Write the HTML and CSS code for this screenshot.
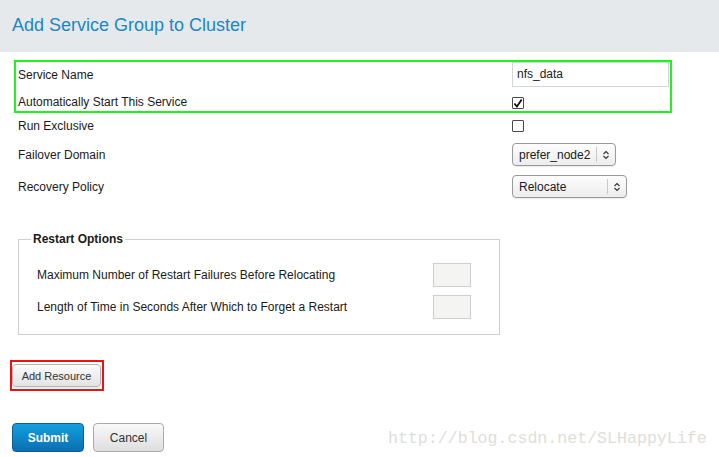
FILE: index.html
```html
<!DOCTYPE html>
<html>
<head>
<meta charset="utf-8">
<title>Add Service Group to Cluster</title>
<link rel="stylesheet" href="styles.css">
</head>
<body>
<header class="hdr">
  <h1 class="title">Add Service Group to Cluster</h1>
</header>
<main class="form">
  <div class="hl-green">
    <div class="row r1">
      <span class="lbl">Service Name</span>
      <span class="textbox">nfs_data</span>
    </div>
    <div class="row r2">
      <span class="lbl">Automatically Start This Service</span>
      <span class="check">
        <svg width="11" height="11" viewBox="0 0 11 11"><path d="M1.5 5.5 L4.3 8.8 L9.6 1.2" fill="none" stroke="#111" stroke-width="2"/></svg>
      </span>
    </div>
  </div>
  <div class="rows">
    <div class="row r3">
      <span class="lbl">Run Exclusive</span>
      <span class="check"></span>
    </div>
    <div class="row r4">
      <span class="lbl">Failover Domain</span>
      <span class="select sel-a"><span class="sel-text">prefer_node2</span><span class="sel-arrow"><svg width="8" height="10" viewBox="0 0 8 10"><path d="M1.5 4 L4 1.5 L6.5 4 M1.5 6 L4 8.5 L6.5 6" fill="none" stroke="#333" stroke-width="1.1"/></svg></span></span>
    </div>
    <div class="row r5">
      <span class="lbl">Recovery Policy</span>
      <span class="select sel-b"><span class="sel-text">Relocate</span><span class="sel-arrow"><svg width="8" height="10" viewBox="0 0 8 10"><path d="M1.5 4 L4 1.5 L6.5 4 M1.5 6 L4 8.5 L6.5 6" fill="none" stroke="#333" stroke-width="1.1"/></svg></span></span>
    </div>
  </div>
  <fieldset class="restart">
    <legend class="legend">Restart Options</legend>
    <div class="frow frow1">
      <span class="lbl">Maximum Number of Restart Failures Before Relocating</span>
      <span class="smallbox"></span>
    </div>
    <div class="frow frow2">
      <span class="lbl">Length of Time in Seconds After Which to Forget a Restart</span>
      <span class="smallbox"></span>
    </div>
  </fieldset>
  <div class="hl-red">
    <button class="btn-add" type="button">Add Resource</button>
  </div>
  <div class="actions">
    <button class="btn-submit" type="button">Submit</button>
    <button class="btn-cancel" type="button">Cancel</button>
  </div>
  <div class="watermark">http://blog.csdn.net/SLHappyLife</div>
</main>
</body>
</html>
```
FILE: styles.css
```css
html, body {
  margin: 0;
  padding: 0;
  background: #fff;
}
body {
  font-family: "Liberation Sans", Arial, sans-serif;
  font-size: 12px;
  color: #1a1a1a;
  width: 719px;
  height: 457px;
  overflow: hidden;
}
.hdr {
  height: 52px;
  background: #e6e9ec;
  box-sizing: border-box;
  padding: 15px 0 0 12px;
}
.title {
  margin: 0;
  font-size: 18px;
  line-height: 20px;
  font-weight: normal;
  color: #1b86c6;
}
.form {
  position: relative;
}
.hl-green {
  margin: 8px 0 0 14px;
  width: 658px;
  box-sizing: border-box;
  border: 2px solid #1cf51c;
  padding-left: 2px;
}
.row {
  display: grid;
  grid-template-columns: 494px auto;
  align-items: center;
}
.lbl {
  line-height: 14px;
}
.r1 { height: 25px; }
.r2 { height: 18px; margin-top: 6px; }
.rows { margin-left: 18px; }
.r3 { height: 26px; }
.r4 { height: 23px; margin-top: 4px; }
.r5 { height: 23px; margin-top: 9px; }
.textbox {
  width: 157px;
  height: 25px;
  box-sizing: border-box;
  border: 1px solid #d3d6d9;
  padding: 0 0 0 4px;
  line-height: 23px;
  font-size: 12px;
  color: #222;
}
.check {
  width: 12px;
  height: 12px;
  box-sizing: border-box;
  border: 1px solid #4a4a4a;
  border-radius: 1px;
  background: #fff;
  display: flex;
  align-items: center;
  justify-content: center;
}
.r2 .check { margin-top: 2px; }
.check svg { display: block; }
.select {
  display: flex;
  align-items: center;
  height: 23px;
  box-sizing: border-box;
  border: 1px solid #9a9a9a;
  border-radius: 4px;
  background: linear-gradient(#fdfdfd, #ededed);
  box-shadow: 0 1px 1px rgba(0,0,0,0.08);
}
.sel-a { width: 104px; }
.sel-b { width: 115px; }
.sel-text {
  flex: 1;
  padding-left: 6px;
  color: #1a1a1a;
}
.sel-arrow {
  width: 18px;
  height: 15px;
  border-left: 1px solid #c9c9c9;
  display: flex;
  align-items: center;
  justify-content: center;
}
.sel-arrow svg { display: block; }
.restart {
  margin: 34px 0 0 18px;
  width: 482px;
  box-sizing: border-box;
  border: 1px solid #cdd0d3;
  padding: 0 0 15px 12px;
}
.legend {
  padding: 0 2px;
  font-weight: bold;
  font-size: 12px;
  line-height: 14px;
  color: #1a1a1a;
}
.frow {
  display: grid;
  grid-template-columns: 396px 38px;
  align-items: center;
  margin-left: 6px;
  height: 24px;
}
.frow1 { margin-top: 17px; }
.frow2 { margin-top: 8px; }
.smallbox {
  width: 38px;
  height: 24px;
  box-sizing: border-box;
  border: 1px solid #cdd0d3;
  background: #f4f4f2;
}
.hl-red {
  display: inline-block;
  margin: 25px 0 0 10px;
  border: 2px solid #ee1111;
  padding: 2px 1px 2px 0;
}
.btn-add {
  display: block;
  width: 89px;
  height: 23px;
  margin: 0;
  padding: 0;
  font-family: "Liberation Sans", Arial, sans-serif;
  font-size: 11px;
  color: #333;
  border: 1px solid #b4b4b4;
  border-radius: 4px;
  background: linear-gradient(#fbfbfb, #e3e3e3);
  box-shadow: 0 1px 1px rgba(0,0,0,0.1);
}
.actions {
  display: flex;
  gap: 9px;
  margin: 32px 0 0 12px;
}
.btn-submit, .btn-cancel {
  height: 29px;
  margin: 0;
  padding: 0;
  font-family: "Liberation Sans", Arial, sans-serif;
  font-size: 12px;
  border-radius: 4px;
}
.btn-submit {
  width: 72px;
  font-weight: bold;
  color: #fff;
  border: 1px solid #0b5f98;
  background: linear-gradient(#10a0e0, #0b6fb0);
}
.btn-cancel {
  width: 71px;
  color: #333;
  border: 1px solid #aaa;
  background: linear-gradient(#f9f9f9, #dedede);
}
.watermark {
  position: absolute;
  left: 388px;
  bottom: 4px;
  font-family: "Liberation Mono", "Courier New", monospace;
  font-size: 16.6px;
  color: #deded8;
  white-space: nowrap;
}
```
